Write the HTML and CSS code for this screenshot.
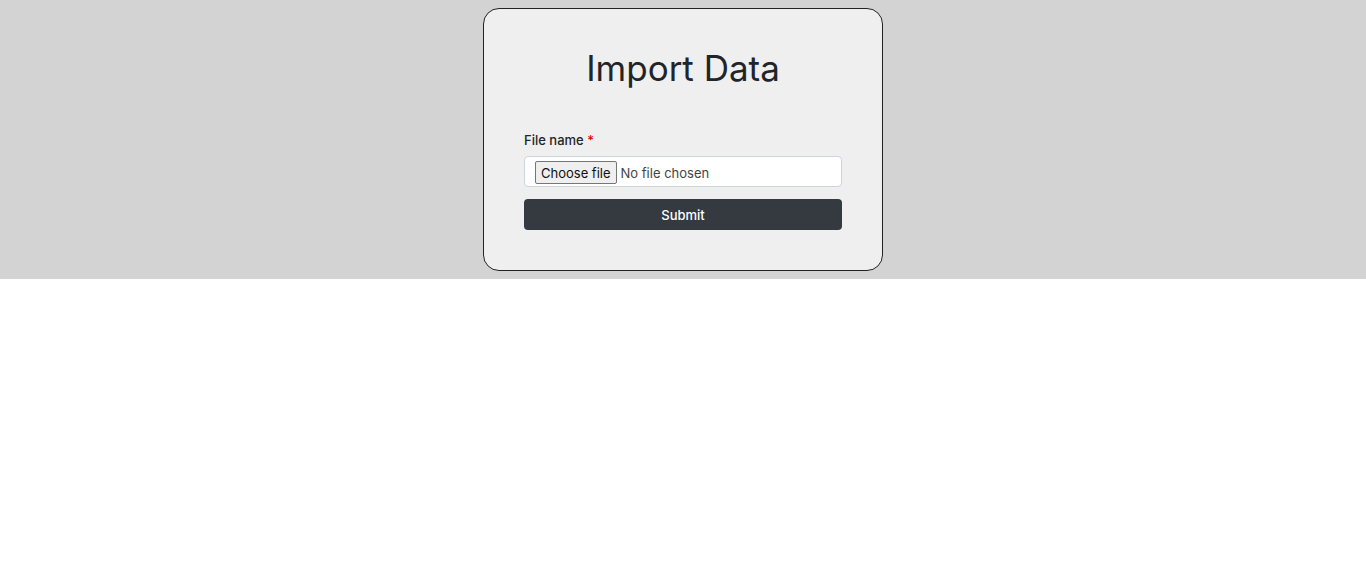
FILE: index.html
```html
<!DOCTYPE html>
<html lang="en">
<head>
<meta charset="utf-8">
<title>Import Data</title>
<link rel="stylesheet" href="styles.css">
</head>
<body>
<section class="band">
  <form class="card">
    <h1 class="title">Import Data</h1>
    <label class="label" for="file">File name <span class="req">*</span></label>
    <label class="file" for="file">
      <input class="file-native" id="file" type="file">
      <span class="file-btn">Choose file</span>
      <span class="file-text">No file chosen</span>
    </label>
    <button class="submit" type="button">Submit</button>
  </form>
</section>
</body>
</html>
```
FILE: styles.css
```css
* { box-sizing: border-box; }
html, body { margin: 0; padding: 0; background: #fff; }
body { font-family: Inter, "Open Sans", "Liberation Sans", sans-serif; color: #212529; }
.band {
  background: #d3d3d3;
  padding: 8px 0;
  display: flex;
  justify-content: center;
}
.card {
  width: 400px;
  background: #efefef;
  border: 1px solid #222;
  border-radius: 16px;
  padding: 40px;
  display: flex;
  flex-direction: column;
}
.title {
  margin: 0 0 44px;
  font-size: 35px;
  line-height: 38px;
  font-weight: 400;
  text-align: center;
  color: #212529;
}
.label {
  font-size: 13px;
  line-height: 18px;
  font-weight: 500;
  margin-bottom: 7px;
}
.req { color: #e00; }
.file {
  display: flex;
  align-items: center;
  width: 100%;
  height: 31px;
  background: #fff;
  border: 1px solid #ced4da;
  border-radius: 4px;
  padding: 2px 10px 0;
  font-size: 13px;
  color: #444;
  cursor: pointer;
}
.file-native {
  display: none;
}
.file-btn {
  display: flex;
  align-items: center;
  height: 23px;
  padding: 0 5px;
  margin-right: 4px;
  color: #111;
  background: #efefef;
  border: 1px solid #767676;
  border-radius: 2px;
}
.submit {
  margin-top: 12px;
  height: 31px;
  width: 100%;
  background: #343a40;
  color: #fff;
  border: none;
  border-radius: 4px;
  font-family: inherit;
  font-size: 13px;
  font-weight: 500;
}
```
